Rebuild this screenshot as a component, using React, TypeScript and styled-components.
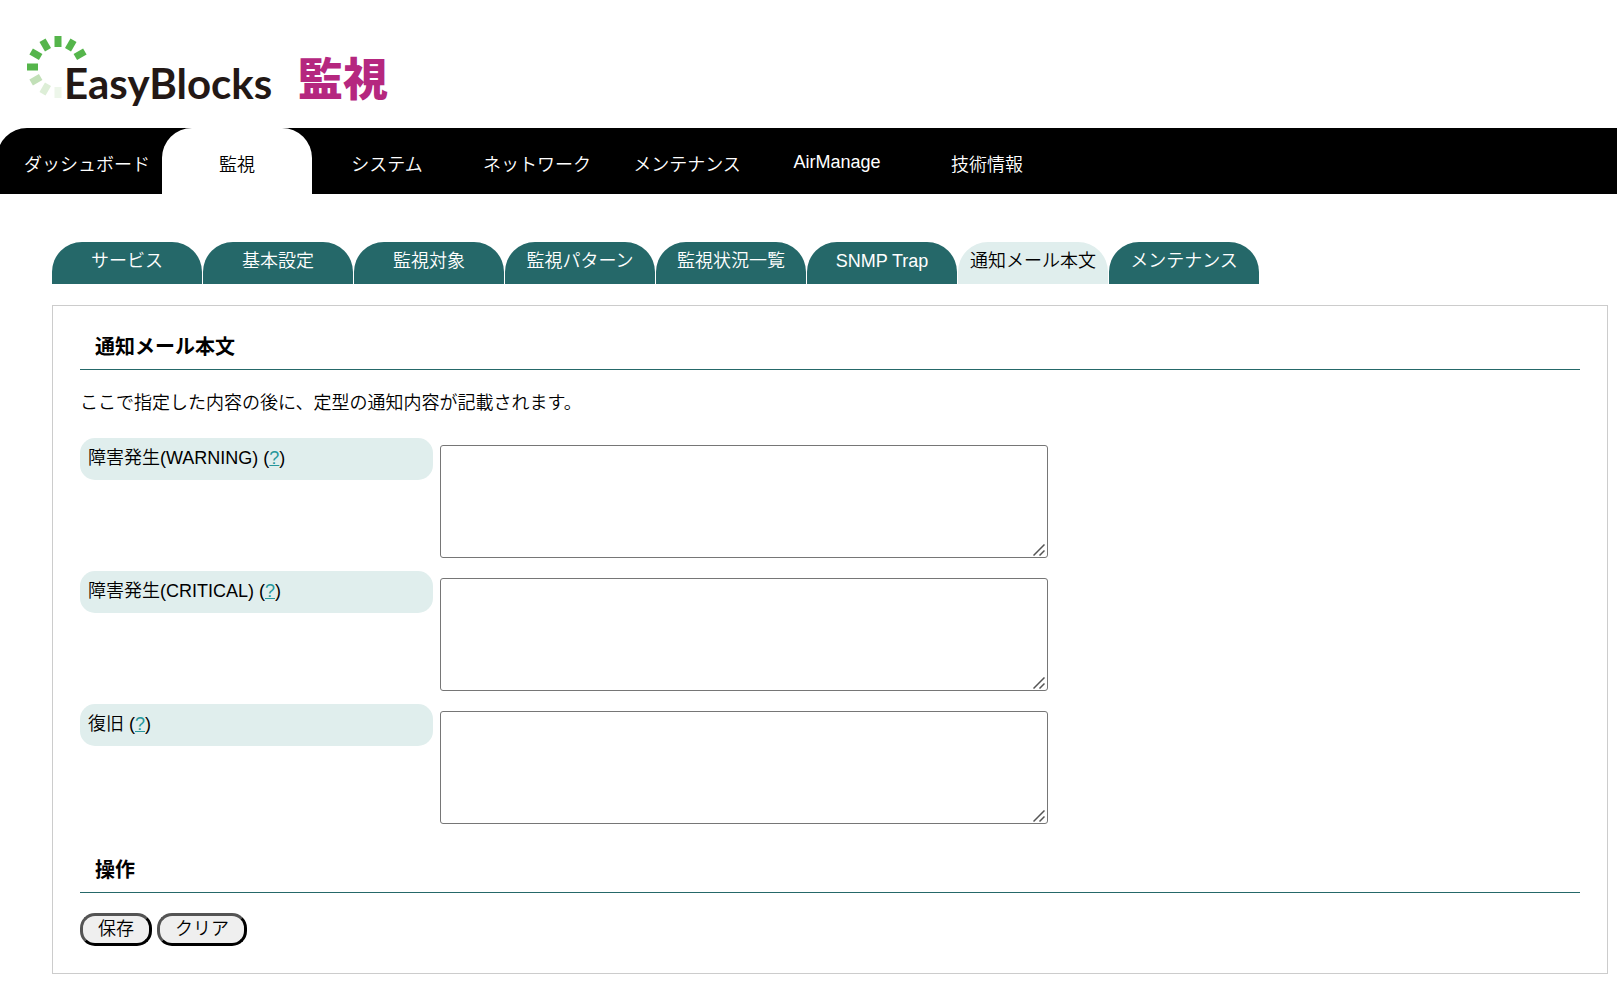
import React from "react";
import styled, { createGlobalStyle, css } from "styled-components";

const teal = "#256869";
const mist = "#e0eeed";

const GlobalStyle = createGlobalStyle`
  *, *::before, *::after { box-sizing: border-box; }
  body {
    margin: 0;
    background: #fff;
    color: #000;
    font: 350 18px/26px "Liberation Sans", "Noto Sans CJK JP", sans-serif;
    overflow-x: hidden;
  }
`;

const Header = styled.header`
  display: flex;
  height: 128px;
  padding: 32px 0 0 24px;
`;

const Logo = styled.svg`
  display: block;
  width: 376px;
  height: 84px;
`;

const LogoName = styled.text`
  font: 700 42px Lato, sans-serif;
  fill: #231815;
`;

const LogoProduct = styled.text`
  font: 900 45px "Noto Sans CJK JP", sans-serif;
  fill: #b5277f;
`;

const MainNav = styled.nav`
  display: flex;
  height: 66px;
  margin-left: -3px;
  padding-left: 15px;
  background: #000;
  border-top-left-radius: 30px;
`;

const MainTab = styled.a<{ $active?: boolean; $latin?: boolean }>`
  width: 150px;
  padding-top: ${(p) => (p.$latin ? 21 : 24)}px;
  line-height: 26px;
  text-align: center;
  text-decoration: none;
  white-space: nowrap;
  color: #fff;
  ${(p) =>
    p.$active &&
    css`
      color: #000;
      background: #fff;
      border-radius: 30px 30px 0 0;
    `}
`;

const Content = styled.main`
  padding: 48px 9px 17px 52px;
`;

const SubNav = styled.nav`
  display: flex;
  gap: 1px;
`;

const SubTab = styled.a<{ $active?: boolean }>`
  width: 150px;
  height: 42px;
  padding-top: 6px;
  line-height: 26px;
  text-align: center;
  text-decoration: none;
  white-space: nowrap;
  border-radius: 30px 30px 0 0;
  color: ${(p) => (p.$active ? "#000" : "#fff")};
  background: ${(p) => (p.$active ? mist : teal)};
`;

const Panel = styled.form`
  margin-top: 21px;
  padding: 27px;
  border: 1px solid #ccc;
`;

const Heading = styled.h2`
  margin: 0;
  padding: 0 15px 8px;
  border-bottom: 1px solid ${teal};
  font-size: 20px;
  line-height: 28px;
`;

const Lead = styled.p`
  margin: 20px 0 22px;
`;

const Field = styled.div`
  display: flex;
  align-items: flex-start;
  gap: 7px;
  height: 133px;
`;

const FieldLabel = styled.div`
  width: 353px;
  height: 42px;
  padding: 7px 8px;
  border-radius: 15px;
  background: ${mist};
`;

const Help = styled.a`
  color: #26979b;
`;

const TextBox = styled.div`
  position: relative;
  margin-top: 7px;
`;

const Area = styled.textarea`
  display: block;
  width: 608px;
  height: 113px;
  padding: 3px;
  border: 1px solid #767676;
  border-radius: 3px;
  font: inherit;
  resize: both;
  &::-webkit-resizer {
    background: transparent;
  }
`;

const Grip = styled.svg`
  position: absolute;
  right: 3px;
  bottom: 2px;
  width: 12px;
  height: 12px;
  pointer-events: none;
`;

const Actions = styled.section`
  margin-top: 19px;
`;

const ButtonRow = styled.div`
  display: flex;
  gap: 5px;
  margin-top: 20px;
`;

const Button = styled.button`
  height: 33px;
  padding: 0 15px 1px;
  border: 3px outset #000;
  border-radius: 15px;
  background: #efefef;
  color: #000;
  font: inherit;
  line-height: 24px;
`;

const ticks: [number, string][] = [
  [180, "#edf6ea"],
  [210, "#ddeed7"],
  [240, "#c2e0b8"],
  [270, "#55b54b"],
  [300, "#55b54b"],
  [330, "#55b54b"],
  [0, "#55b54b"],
  [30, "#55b54b"],
  [60, "#55b54b"],
];

const mainTabs = ["ダッシュボード", "監視", "システム", "ネットワーク", "メンテナンス", "AirManage", "技術情報"];
const subTabs = ["サービス", "基本設定", "監視対象", "監視パターン", "監視状況一覧", "SNMP Trap", "通知メール本文", "メンテナンス"];
const fields = [
  { id: "warning", label: "障害発生(WARNING)" },
  { id: "critical", label: "障害発生(CRITICAL)" },
  { id: "recovery", label: "復旧" },
];

export default function App() {
  return (
    <>
      <GlobalStyle />
      <Header>
        <Logo viewBox="0 0 376 84" role="img" aria-label="EasyBlocks 監視">
          {ticks.map(([angle, fill]) => (
            <rect key={angle} x="30.5" y="4" width="7" height="11" fill={fill} transform={`rotate(${angle} 34 35)`} />
          ))}
          <LogoName x="40" y="67">EasyBlocks</LogoName>
          <LogoProduct x="274" y="64">監視</LogoProduct>
        </Logo>
      </Header>
      <MainNav>
        {mainTabs.map((t) => (
          <MainTab key={t} href="#" $active={t === "監視"} $latin={t === "AirManage"}>{t}</MainTab>
        ))}
      </MainNav>
      <Content>
        <SubNav>
          {subTabs.map((t) => (
            <SubTab key={t} href="#" $active={t === "通知メール本文"}>{t}</SubTab>
          ))}
        </SubNav>
        <Panel>
          <Heading>通知メール本文</Heading>
          <Lead>ここで指定した内容の後に、定型の通知内容が記載されます。</Lead>
          {fields.map((f) => (
            <Field key={f.id}>
              <FieldLabel>
                <label htmlFor={f.id}>{f.label}</label> (<Help href="#">?</Help>)
              </FieldLabel>
              <TextBox>
                <Area id={f.id} />
                <Grip viewBox="0 0 12 12" stroke="#555" strokeWidth="1.5" aria-hidden="true">
                  <path d="M0.5 11.5 11.5 0.5M6.5 11.5 11.5 6.5" />
                </Grip>
              </TextBox>
            </Field>
          ))}
          <Actions>
            <Heading>操作</Heading>
            <ButtonRow>
              <Button type="button">保存</Button>
              <Button type="reset">クリア</Button>
            </ButtonRow>
          </Actions>
        </Panel>
      </Content>
    </>
  );
}
